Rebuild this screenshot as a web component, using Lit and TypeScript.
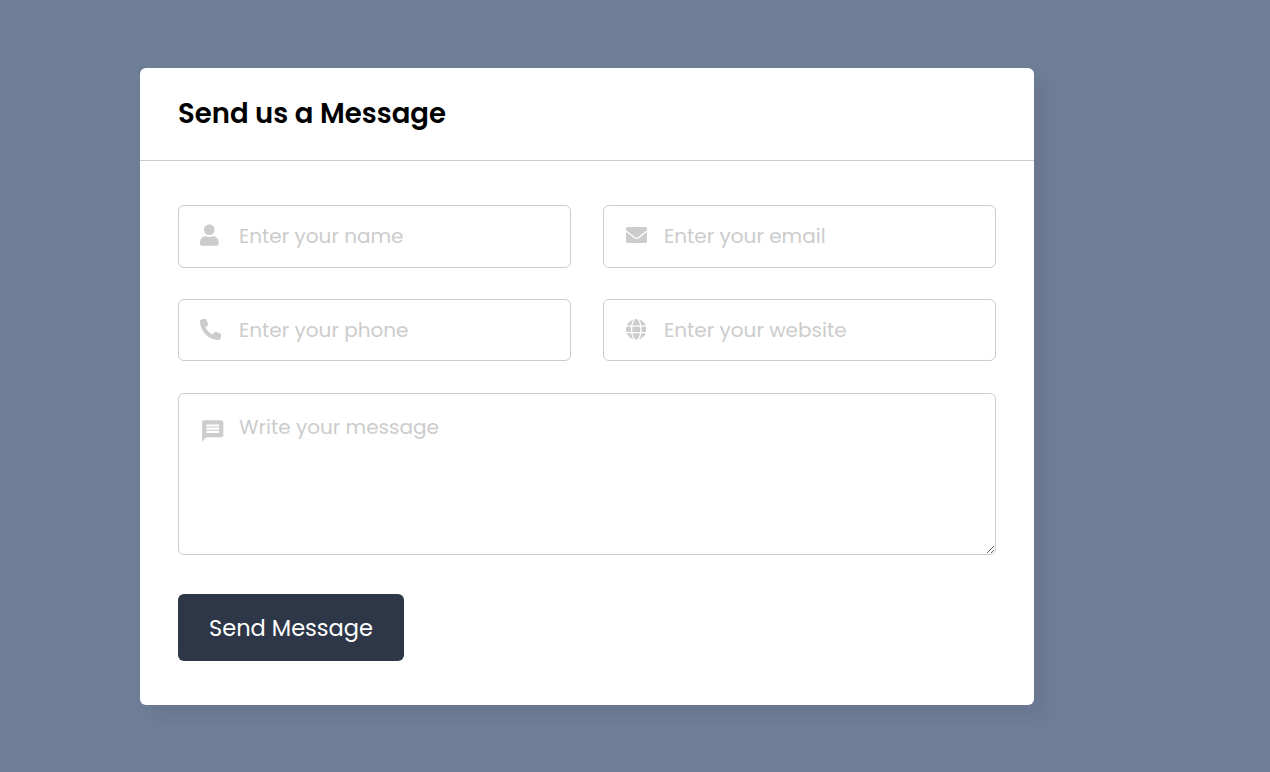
import { LitElement, html, css, svg } from "lit";
import { customElement } from "lit/decorators.js";

const userIcon = svg`<path d="M224 256c70.7 0 128-57.3 128-128S294.700 0 224 0 96 57.300 96 128s57.300 128 128 128zm89.600 32h-16.700c-22.200 10.200-46.900 16-72.900 16s-50.600-5.800-72.900-16h-16.700C60.200 288 0 348.200 0 422.400V464c0 26.500 21.500 48 48 48h352c26.500 0 48-21.500 48-48v-41.600c0-74.200-60.200-134.400-134.400-134.400z"/>`;
const envelopeIcon = svg`<path d="M502.300 190.800c3.900-3.100 9.700-.2 9.700 4.700V400c0 26.500-21.500 48-48 48H48c-26.500 0-48-21.500-48-48V195.600c0-5 5.700-7.800 9.700-4.700 22.400 17.400 52.100 39.500 154.100 113.600 21.100 15.400 56.700 47.800 92.200 47.600 35.700.3 72-32.800 92.300-47.600 102-74.100 131.600-96.300 154-113.700zM256 320c23.200.4 56.600-29.200 73.400-41.400 132.700-96.300 142.800-104.700 173.400-128.700 5.800-4.500 9.200-11.500 9.200-18.900v-19c0-26.500-21.500-48-48-48H48c-26.500 0-48 21.500-48 48v19c0 7.400 3.400 14.300 9.200 18.900 30.600 23.900 40.700 32.400 173.400 128.700 16.800 12.200 50.200 41.800 73.400 41.400z"/>`;
const phoneIcon = svg`<path d="M497.390 361.800l-112-48a24 24 0 0 0-28 6.900l-49.600 60.600A370.660 370.660 0 0 1 130.600 204.110l60.600-49.600a23.940 23.940 0 0 0 6.900-28l-48-112A24.160 24.160 0 0 0 122.600.610l-104 24A24 24 0 0 0 0 48c0 256.500 207.900 464 464 464a24 24 0 0 0 23.400-18.600l24-104a24.290 24.290 0 0 0-14.010-27.600z"/>`;
const globeIcon = svg`<path d="M336.500 160C322 70.700 287.800 8 248 8s-74 62.700-88.500 152h177zM152 256c0 22.200 1.200 43.500 3.300 64h185.300c2.100-20.500 3.300-41.800 3.300-64s-1.200-43.500-3.300-64H155.300c-2.100 20.500-3.300 41.800-3.300 64zm324.700-96c-28.600-67.900-86.500-120.400-158-141.600 24.400 33.800 41.200 84.700 50 141.600h108zM177.200 18.400C105.800 39.600 47.800 92.100 19.300 160h108c8.700-56.900 25.500-107.800 49.900-141.600zM487.400 192H372.700c2.100 21 3.300 42.500 3.300 64s-1.200 43-3.300 64h114.600c5.500-20.500 8.600-41.800 8.600-64s-3.100-43.500-8.500-64zM120 256c0-21.500 1.200-43 3.300-64H8.600C3.200 212.500 0 233.800 0 256s3.200 43.500 8.600 64h114.600c-2-21-3.200-42.500-3.200-64zm39.500 96c14.500 89.300 48.700 152 88.500 152s74-62.700 88.500-152h-177zm159.300 141.600c71.400-21.200 129.400-73.700 158-141.600h-108c-8.800 56.900-25.600 107.800-50 141.600zM19.300 352c28.600 67.900 86.500 120.400 158 141.600-24.400-33.800-41.200-84.700-50-141.600h-108z"/>`;
const messageIcon = svg`<path d="M20 2H4c-1.100 0-2 .9-2 2v18l4-4h14c1.100 0 2-.9 2-2V4c0-1.100-.9-2-2-2zm-2 12H6v-2h12v2zm0-3H6V9h12v2zm0-3H6V6h12v2z"/>`;

@customElement("app-root")
export class AppRoot extends LitElement {
  static styles = css`
    :host, * { box-sizing: border-box; }
    :host {
      display: block;
      height: 772px;
      padding: 68px 0 0 140px;
      background: #6e7e96;
      font-family: Poppins, Inter, sans-serif;
    }
    .card {
      width: 894px;
      height: 637px;
      background: #fff;
      border-radius: 6px;
      box-shadow: 12px 12px 12px rgba(80, 60, 120, 0.11);
    }
    header {
      height: 93px;
      padding: 1px 38px 0;
      border-bottom: 1px solid #ccc;
      font-size: 27.500px;
      line-height: 90px;
      font-weight: 600;
      white-space: nowrap;
    }
    form {
      padding: 44px 38px 0;
      display: grid;
      grid-template-columns: 393px 393px;
      grid-template-rows: 63px 93px 194px 106px;
      column-gap: 32px;
    }
    .field { display: grid; }
    .field > * { grid-area: 1 / 1; }
    .second { margin-top: 31px; }
    .wide { grid-column: 1 / -1; margin-top: 32px; }
    input, textarea {
      width: 100%;
      height: 100%;
      margin: 0;
      border: 1px solid #ccc;
      border-radius: 6px;
      background: transparent;
      outline: none;
      font: 400 20px Poppins, Inter, sans-serif;
      color: #333;
      padding: 0 20px 1px 60px;
    }
    .second input { padding-bottom: 0; }
    textarea { padding-top: 18px; resize: both; display: block; }
    ::placeholder { color: #ccc; opacity: 1; }
    .icon {
      fill: #ccc;
      height: 22px;
      align-self: center;
      justify-self: start;
      margin: 0 0 3px 22px;
      pointer-events: none;
    }
    .second .icon { margin-bottom: 2px; }
    .right .icon { margin-left: 22.500px; }
    .message-icon {
      width: 25.500px;
      height: 25.500px;
      align-self: start;
      margin: 24.500px 0 0 22px;
    }
    button {
      width: 226px;
      height: 67px;
      margin-top: 39px;
      padding: 1px 0 0;
      border: 0;
      border-radius: 6px;
      background: #2d3748;
      color: #fff;
      font: 400 22.500px Poppins, Inter, sans-serif;
      white-space: nowrap;
      cursor: pointer;
    }
  `;

  private field(icon: unknown, viewBox: string, label: string, cls = "") {
    return html`<label class="field ${cls}">
      <input placeholder=${label} />
      <svg class="icon" viewBox=${viewBox}>${icon}</svg>
    </label>`;
  }

  render() {
    return html`<section class="card">
      <header>Send us a Message</header>
      <form>
        ${this.field(userIcon, "0 -9 448 530", "Enter your name")}
        ${this.field(envelopeIcon, "0 -9 512 530", "Enter your email", "right")}
        ${this.field(phoneIcon, "0 -18 512 530", "Enter your phone", "second")}
        ${this.field(globeIcon, "0 -18 496 530", "Enter your website", "second right")}
        <label class="field wide">
          <textarea placeholder="Write your message"></textarea>
          <svg class="icon message-icon" viewBox="0 0 24 24">${messageIcon}</svg>
        </label>
        <button type="button">Send Message</button>
      </form>
    </section>`;
  }
}
